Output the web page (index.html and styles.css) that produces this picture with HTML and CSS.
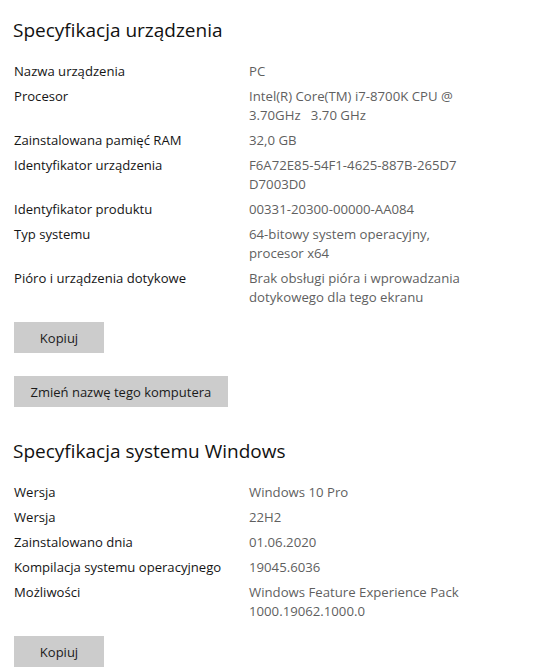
FILE: index.html
```html
<!DOCTYPE html>
<html lang="pl">
<head>
<meta charset="utf-8">
<title>Informacje</title>
<link rel="stylesheet" href="styles.css">
</head>
<body>
<main class="page">
  <section class="section">
    <h2 class="title">Specyfikacja urządzenia</h2>
    <div class="specs">
      <div class="row"><div class="label">Nazwa urządzenia</div><div class="value">PC</div></div>
      <div class="row"><div class="label">Procesor</div><div class="value">Intel(R) Core(TM) i7-8700K CPU @<br>3.70GHz&nbsp;&nbsp;&nbsp;3.70 GHz</div></div>
      <div class="row"><div class="label">Zainstalowana pamięć RAM</div><div class="value">32,0 GB</div></div>
      <div class="row"><div class="label">Identyfikator urządzenia</div><div class="value">F6A72E85-54F1-4625-887B-265D7<br>D7003D0</div></div>
      <div class="row"><div class="label">Identyfikator produktu</div><div class="value">00331-20300-00000-AA084</div></div>
      <div class="row"><div class="label">Typ systemu</div><div class="value">64-bitowy system operacyjny,<br>procesor x64</div></div>
      <div class="row"><div class="label">Pióro i urządzenia dotykowe</div><div class="value">Brak obsługi pióra i wprowadzania<br>dotykowego dla tego ekranu</div></div>
    </div>
    <div class="actions">
      <button class="btn btn-copy">Kopiuj</button>
      <button class="btn">Zmień nazwę tego komputera</button>
    </div>
  </section>
  <section class="section section-win">
    <h2 class="title">Specyfikacja systemu Windows</h2>
    <div class="specs">
      <div class="row"><div class="label">Wersja</div><div class="value">Windows 10 Pro</div></div>
      <div class="row"><div class="label">Wersja</div><div class="value">22H2</div></div>
      <div class="row"><div class="label">Zainstalowano dnia</div><div class="value">01.06.2020</div></div>
      <div class="row"><div class="label">Kompilacja systemu operacyjnego</div><div class="value">19045.6036</div></div>
      <div class="row"><div class="label">Możliwości</div><div class="value">Windows Feature Experience Pack<br>1000.19062.1000.0</div></div>
    </div>
    <div class="actions">
      <button class="btn btn-copy">Kopiuj</button>
    </div>
  </section>
</main>
</body>
</html>
```
FILE: styles.css
```css
html, body {
  margin: 0;
  padding: 0;
  background: #ffffff;
}
body {
  font-family: "Open Sans", "Noto Sans", "Liberation Sans", sans-serif;
  color: #1a1a1a;
  font-size: 13px;
}
.page {
  padding: 16px 0 0 14px;
}
.title {
  margin: 0 0 18px -1px;
  font-size: 19px;
  font-weight: 400;
  line-height: 28px;
  color: #111;
}
.specs {
  display: flex;
  flex-direction: column;
  gap: 6px;
}
.row {
  display: grid;
  grid-template-columns: 235px 1fr;
  line-height: 19px;
}
.label {
  color: #151515;
  font-size: 13.1px;
}
.value {
  color: #5f5f5f;
  font-size: 13.2px;
  white-space: nowrap;
}
.actions {
  display: flex;
  flex-direction: column;
  align-items: flex-start;
  gap: 23px;
  margin-top: 15px;
}
.btn {
  font-family: inherit;
  font-size: 13px;
  color: #1a1a1a;
  background: #cccccc;
  border: none;
  height: 31px;
  padding: 0 16.5px;
  margin: 0;
}
.btn-copy {
  width: 90px;
  padding: 0;
}
.section-win {
  margin-top: 30px;
}
```
